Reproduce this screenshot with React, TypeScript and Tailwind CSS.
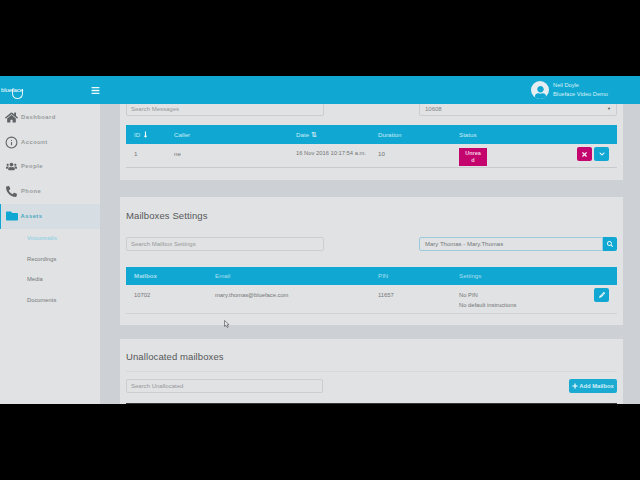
import { FaBars, FaChevronDown, FaFolder, FaHome, FaLongArrowAltDown, FaPencilAlt, FaPhone, FaPlus, FaSearch, FaTimes, FaUser, FaUsers } from 'react-icons/fa'
import { FiInfo } from 'react-icons/fi'

const navItems = [
  { label: 'Dashboard', icon: <FaHome className="text-[13px]" /> },
  { label: 'Account', icon: <FiInfo className="text-[13px]" /> },
  { label: 'People', icon: <FaUsers className="text-[11px]" /> },
  { label: 'Phone', icon: <FaPhone className="text-[11px] scale-x-[-1]" /> },
]

const assetLinks = ['Recordings', 'Media', 'Documents']

function SearchBox({ placeholder, className }: { placeholder: string; className: string }) {
  return (
    <div className={`flex h-[14px] items-center rounded-[2px] border border-[#cbcdd0] bg-[#e1e2e3] px-[4px] text-[6px] text-[#96999b] ${className}`}>
      {placeholder}
    </div>
  )
}

export default function App() {
  return (
    <div className="h-[480px] w-[640px] overflow-hidden bg-black pt-[76px] font-['Liberation_Sans',sans-serif]">
      <div className="flex h-[328px] flex-col overflow-hidden">
        <header className="flex h-[28px] shrink-0 items-center bg-[#10a8d2] text-white">
          <div className="relative w-[91px] pl-[1px] text-[6px] tracking-[-0.1px]">
            blueface
            <div className="absolute left-[12px] top-[3px] h-[10px] w-[11px] rounded-b-full border-b border-l border-r border-[#e6f6fb]" />
          </div>
          <FaBars className="text-[9px] text-[#eef9fc]" />
          <div className="ml-auto flex items-center gap-[4px] pr-[32px]">
            <div className="flex h-[18px] w-[18px] items-center justify-center overflow-hidden rounded-full bg-[#e6eef2]">
              <FaUser className="mt-[4px] text-[13px] text-[#10a8d2]" />
            </div>
            <div className="text-[5.7px] leading-[9px] text-[#d8f0f7]">
              <div>Neil Doyle</div>
              <div>Blueface Video Demo</div>
            </div>
          </div>
        </header>

        <div className="flex min-h-0 flex-1">
          <aside className="w-[100px] shrink-0 bg-[#e0e2e3] pt-[1px] text-[5.8px] font-bold tracking-[0.5px] text-[#979a9d]">
            {navItems.map((item) => (
              <div key={item.label} className="flex h-[24.7px] items-center">
                <div className="flex w-[21px] justify-center pl-[2px] text-[#5f6366]">{item.icon}</div>
                {item.label}
              </div>
            ))}
            <div className="flex h-[25px] items-center border-l-[1.5px] border-[#10a8d2] bg-[#d6dde3] text-[#4aa9c0]">
              <div className="flex w-[19.5px] justify-center pl-[2px] text-[#10a8d2]">
                <FaFolder className="text-[12px]" />
              </div>
              Assets
            </div>
            <div className="pl-[27px] tracking-normal">
              <div className="flex h-[20px] items-center text-[#9dd3e3]">Voicemails</div>
              {assetLinks.map((link) => (
                <div key={link} className="flex h-[20.7px] items-center font-normal text-[#74777a]">{link}</div>
              ))}
            </div>
          </aside>

          <main className="relative flex min-w-0 flex-1 flex-col gap-[17px] overflow-hidden bg-[#cdd0d4] pl-[20px] pr-[17px]">
            {/* Messages */}
            <section className="h-[76px] shrink-0 bg-[#e1e2e3] px-[6px] text-[6.2px] text-[#727578]">
              <div className="flex h-[12px] items-end justify-between">
                <SearchBox placeholder="Search Messages" className="w-[198px] shrink-0" />
                <div className="flex h-[14px] w-[198px] items-center justify-between rounded-[2px] border border-[#cbcdd0] px-[5px] text-[6px] text-[#808385]">
                  10608
                  <span className="text-[4px] text-[#555]">▼</span>
                </div>
              </div>
              <div className="mt-[9px] grid h-[19px] grid-cols-[40px_122px_82px_81px_1fr] items-center bg-[#10a8d2] px-[8px] text-[#c9ebf5]">
                <span className="flex items-center gap-[2px]">ID <FaLongArrowAltDown className="text-[7px] text-white" /></span>
                <span>Caller</span>
                <span className="flex items-center gap-[2px]">Date <span className="text-[7px] leading-none text-white">⇅</span></span>
                <span>Duration</span>
                <span>Status</span>
              </div>
              <div className="grid h-[24px] grid-cols-[40px_122px_82px_81px_1fr] items-start border-b border-[#c9cccd] px-[8px] pt-[5px]">
                <span>1</span>
                <span>ne</span>
                <span className="text-[5.8px] whitespace-nowrap">16 Nov 2016 10:17:54 a.m.</span>
                <span>10</span>
                <div className="flex items-start justify-between">
                  <div className="-mt-[1px] flex h-[18px] w-[28px] items-center justify-center bg-[#c4056e] text-center text-[5.5px] font-bold leading-[7px] text-[#f3cfe2]">
                    Unrea<br />d
                  </div>
                  <div className="-mt-[2px] flex gap-[2px]">
                    <div className="flex h-[14px] w-[15px] items-center justify-center rounded-[2px] bg-[#c4056e] text-[7px] text-[#f8e6f0]"><FaTimes /></div>
                    <div className="flex h-[14px] w-[15px] items-center justify-center rounded-[2px] bg-[#10a8d2] text-[6px] text-[#eef9fc]"><FaChevronDown /></div>
                  </div>
                </div>
              </div>
            </section>

            {/* Mailboxes Settings */}
            <section className="h-[128px] shrink-0 bg-[#e1e2e3] px-[6px] text-[6.2px] text-[#727578]">
              <h2 className="flex h-[39px] items-center pb-[1px] text-[9.5px] font-normal tracking-[0.1px] text-[#55585a]">Mailboxes Settings</h2>
              <div className="mt-[1px] flex items-center justify-between">
                <SearchBox placeholder="Search Mailbox Settings" className="w-[198px]" />
                <div className="flex h-[14px] w-[198px]">
                  <div className="flex flex-1 items-center rounded-l-[2px] border border-[#9bcbdb] px-[5px] text-[6px] text-[#74777a]">Mary Thomas - Mary.Thomas</div>
                  <div className="flex w-[14px] items-center justify-center rounded-r-[2px] bg-[#10a8d2] text-[6px] text-[#eef9fc]"><FaSearch /></div>
                </div>
              </div>
              <div className="mt-[16px] grid h-[18px] grid-cols-[81px_163px_81px_1fr] items-center bg-[#10a8d2] px-[8px] font-bold text-[#aadfee]">
                <span>Mailbox</span>
                <span className="font-normal">Email</span>
                <span className="font-normal">PIN</span>
                <span className="font-normal">Settings</span>
              </div>
              <div className="grid h-[29px] grid-cols-[81px_163px_81px_1fr] border-b border-[#d0d2d4] px-[8px] pt-[6px] text-[5.8px]">
                <span>10702</span>
                <span>mary.thomas@blueface.com</span>
                <span>11657</span>
                <div className="flex justify-between">
                  <div className="-mt-[1px] leading-[10px]">
                    <div>No PIN</div>
                    <div>No default instructions</div>
                  </div>
                  <div className="-mt-[3px] flex h-[14px] w-[15px] items-center justify-center rounded-[2px] bg-[#10a8d2] text-[6px] text-[#eef9fc]"><FaPencilAlt /></div>
                </div>
              </div>
            </section>

            {/* Unallocated mailboxes */}
            <section className="-mt-[3px] shrink-0 bg-[#e1e2e3] px-[6px] text-[6.2px]">
              <h2 className="flex h-[33px] items-center border-b border-[#d6d8d9] pt-[5px] text-[9.5px] font-normal tracking-[0.1px] text-[#55585a]">Unallocated mailboxes</h2>
              <div className="mt-[7px] flex items-center justify-between">
                <SearchBox placeholder="Search Unallocated" className="w-[197px]" />
                <div className="flex h-[14px] w-[48px] items-center justify-center gap-[1px] rounded-[2px] bg-[#1babd2] text-[5.8px] font-bold text-[#d5eff7]">
                  <FaPlus className="text-[6px] text-white" /> Add Mailbox
                </div>
              </div>
              <div className="mt-[10px] h-[3px] bg-[#33363a]" />
            </section>

            {/* Mouse pointer */}
            <svg className="absolute left-[124px] top-[216px]" width="6" height="8" viewBox="0 0 6 8">
              <path d="M0.5 0.5 L0.5 6.5 L2 5.2 L3.2 7.5 L4.2 7 L3.2 4.8 L5 4.6 Z" fill="#e8e8e8" stroke="#44484c" strokeWidth="0.6" />
            </svg>
          </main>
        </div>
      </div>
    </div>
  )
}
